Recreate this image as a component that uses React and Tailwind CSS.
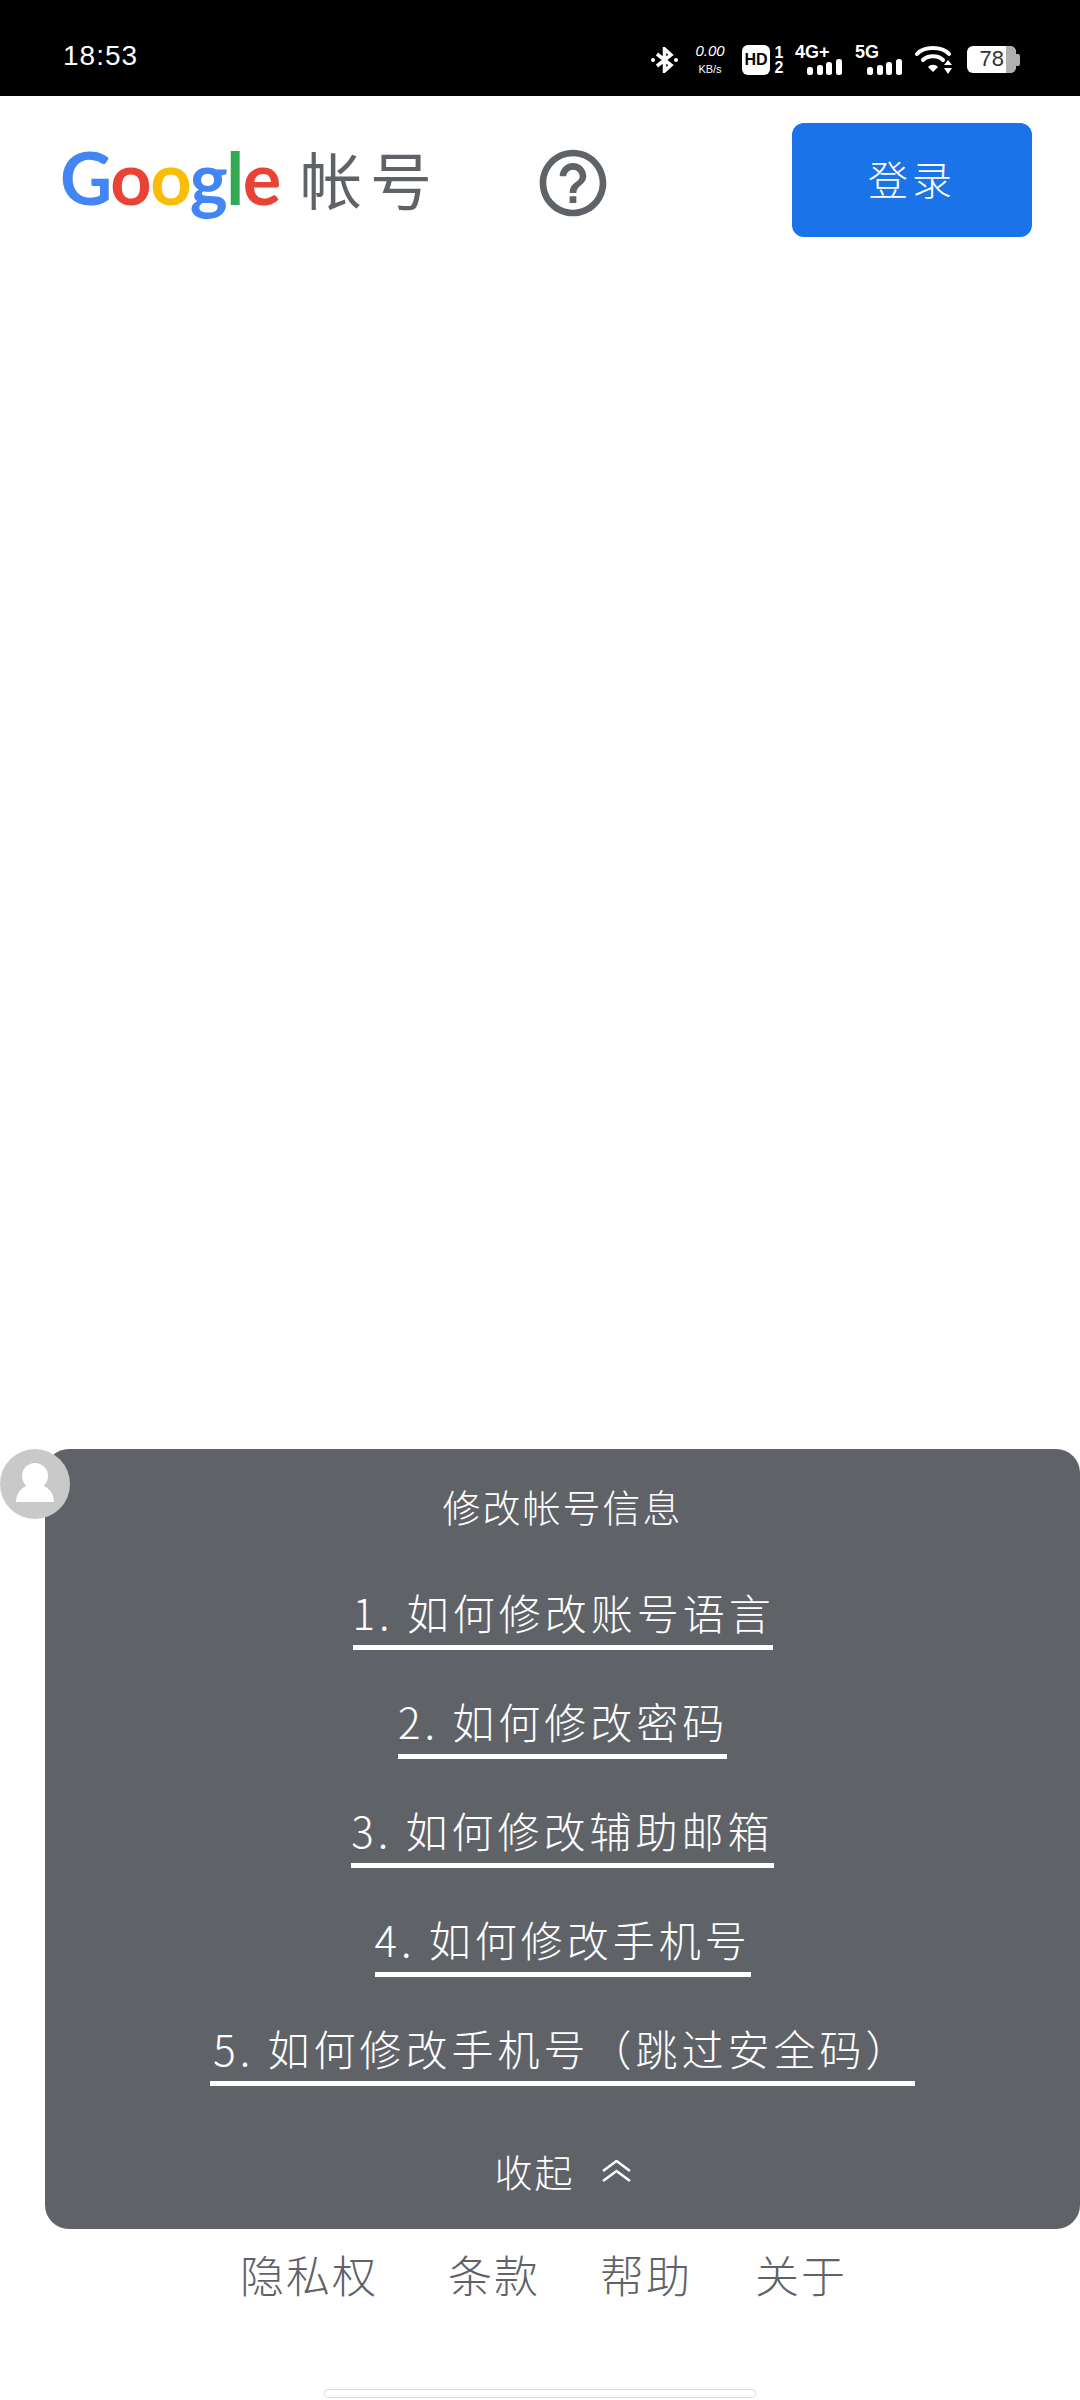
import { MdHelpOutline } from 'react-icons/md';

const cjk = "font-['Noto_Sans_CJK_SC','Noto_Sans',sans-serif]";
const sans = "font-['Liberation_Sans',sans-serif]";

const links = [
  { text: '1. 如何修改账号语言', w: 'w-[420px]' },
  { text: '2. 如何修改密码', w: 'w-[329px]' },
  { text: '3. 如何修改辅助邮箱', w: 'w-[423px]' },
  { text: '4. 如何修改手机号', w: 'w-[376px]' },
  { text: '5. 如何修改手机号（跳过安全码）', w: 'w-[705px]' },
];

function Signal() {
  return (
    <svg width="35" height="16" viewBox="0 0 35 16" className="absolute right-0 bottom-0">
      <rect x="0" y="8" width="6" height="8" rx="2.5" fill="#fff" />
      <rect x="10" y="6" width="6" height="10" rx="2.5" fill="#fff" />
      <rect x="19" y="3" width="6" height="13" rx="2.5" fill="#fff" />
      <rect x="29" y="0" width="6" height="16" rx="2.5" fill="#fff" />
    </svg>
  );
}

function StatusBar() {
  return (
    <div className="h-[96px] bg-black flex items-start justify-between pl-[63px] pr-[60px] text-white">
      <span className={`mt-[41px] text-[28px] leading-[30px] tracking-[1px] ${sans}`}>18:53</span>
      <div className="flex items-center mt-[44px] h-[31px]">
        <svg width="27" height="26" viewBox="0 0 27 26" fill="none" stroke="#fff" strokeWidth="3.5">
          <path d="M6 7 L20 18 L13.5 24 V2 L20 8 L6 19" />
          <circle cx="2" cy="13" r="2" fill="#fff" stroke="none" />
          <circle cx="25" cy="13" r="2" fill="#fff" stroke="none" />
        </svg>
        <div className={`flex flex-col items-center w-[34px] ml-[15px] ${sans}`}>
          <span className="text-[15px] leading-[14px] italic">0.00</span>
          <span className="text-[11px] leading-[12px] mt-[5px]">KB/s</span>
        </div>
        <div className={`w-[28px] h-[30px] ml-[15px] bg-white rounded-[6px] flex items-center justify-center text-black text-[16px] font-bold ${sans}`}>HD</div>
        <div className={`flex flex-col items-center w-[12px] ml-[3px] text-[16px] leading-[15px] font-bold ${sans}`}>
          <span>1</span>
          <span>2</span>
        </div>
        <div className={`relative w-[47px] h-[31px] ml-[10px] font-bold text-[18px] leading-[16px] ${sans}`}>
          <span className="absolute left-0 top-0">4G+</span>
          <Signal />
        </div>
        <div className={`relative w-[47px] h-[31px] ml-[13px] font-bold text-[18px] leading-[16px] ${sans}`}>
          <span className="absolute left-0 top-0">5G</span>
          <Signal />
        </div>
        <svg width="38" height="30" viewBox="0 0 38 30" className="ml-[13px]">
          <path d="M2 9 C9 1 27 1 34 9" fill="none" stroke="#fff" strokeWidth="4" strokeLinecap="round" />
          <path d="M8 15 C13 10 23 10 28 15" fill="none" stroke="#fff" strokeWidth="4" strokeLinecap="round" />
          <path d="M13 22 L18 27 L23 22 C20 19 16 19 13 22Z" fill="#fff" />
          <path d="M29 20 L37 20 L33 15Z M29 23 L37 23 L33 29Z" fill="#fff" />
        </svg>
        <div className="flex items-center ml-[14px]">
          <div className="relative w-[49px] h-[27px] bg-white rounded-[6px] overflow-hidden flex justify-end">
            <div className="w-[10px] bg-[#b0b0b0]" />
            <span className={`absolute right-[12px] top-[1px] text-[22px] leading-[24px] text-[#333] ${sans}`}>78</span>
          </div>
          <div className="w-[4px] h-[12px] bg-[#b0b0b0] rounded-r-[2px]" />
        </div>
      </div>
    </div>
  );
}

function Header() {
  return (
    <div className="flex items-start pl-[60px] pt-[27px]">
      <div className="flex items-baseline w-[372px] mt-[9px] whitespace-nowrap">
        <div className="w-[240px] shrink-0 text-[72px] leading-[90px] font-bold tracking-[-1.5px] font-['Lato',sans-serif]">
          <span className="text-[#4285f4]">G</span>
          <span className="text-[#ea4335]">o</span>
          <span className="text-[#fbbc05]">o</span>
          <span className="text-[#4285f4]">g</span>
          <span className="text-[#34a853]">l</span>
          <span className="text-[#ea4335]">e</span>
        </div>
        <span className={`shrink-0 text-[62px] leading-[90px] tracking-[8px] text-[#5f6368] ${cjk}`}>帐号</span>
      </div>
      <MdHelpOutline size={80} color="#5f6368" className="ml-[101px] mt-[20px]" />
      <button className={`w-[240px] h-[114px] ml-[179px] pb-[4px] rounded-[12px] bg-[#1a73e8] text-white text-[40px] tracking-[4px] font-light ${cjk}`}>登录</button>
    </div>
  );
}

function HelpPanel() {
  return (
    <div className="relative pl-[45px] mt-[1212px]">
      <div className="absolute left-0 top-0 w-[70px] h-[70px] rounded-full bg-[#c9c9c9]">
        <svg width="70" height="70" viewBox="0 0 70 70">
          <circle cx="35" cy="27" r="13" fill="#fff" />
          <path d="M16 53 C16 41 26 35 35 35 C44 35 54 41 54 53Z" fill="#fff" />
        </svg>
      </div>
      <div className={`h-[780px] bg-[#5f6368] rounded-[24px] flex flex-col items-center text-white font-light ${cjk}`}>
        <div className="mt-[33px] h-[48px] text-[38px] leading-[48px] tracking-[2px]">修改帐号信息</div>
        <div className="mt-[55px] flex flex-col items-center gap-[44px]">
          {links.map((l) => (
            <a key={l.text} className={`${l.w} h-[65px] border-b-[5px] border-white text-center whitespace-nowrap text-[42px] tracking-[4px] leading-[54px]`}>
              {l.text}
            </a>
          ))}
        </div>
        <div className="mt-[60px] flex items-center gap-[27px] text-[38px] leading-[50px]">
          <span className="tracking-[2px]">收起</span>
          <svg width="29" height="22" viewBox="0 0 29 22" fill="none" stroke="#fff" strokeWidth="2.5">
            <path d="M1 11 L14.5 1 L28 11" />
            <path d="M1 21 L14.5 11 L28 21" />
          </svg>
        </div>
      </div>
    </div>
  );
}

function Footer() {
  return (
    <div className={`flex pl-[240px] mt-[15px] h-[60px] items-center text-[#5f6368] text-[44px] tracking-[2px] leading-[60px] font-light ${cjk}`}>
      <span className="w-[208px]">隐私权</span>
      <span className="w-[152px]">条款</span>
      <span className="w-[155px]">帮助</span>
      <span>关于</span>
    </div>
  );
}

export default function App() {
  return (
    <div className="w-[1080px] h-[2400px] bg-white overflow-hidden">
      <StatusBar />
      <Header />
      <HelpPanel />
      <Footer />
      <div className="w-[432px] h-[9px] mx-auto mt-[85px] bg-white rounded-[4px] border border-[#dcdcdc]" />
    </div>
  );
}
